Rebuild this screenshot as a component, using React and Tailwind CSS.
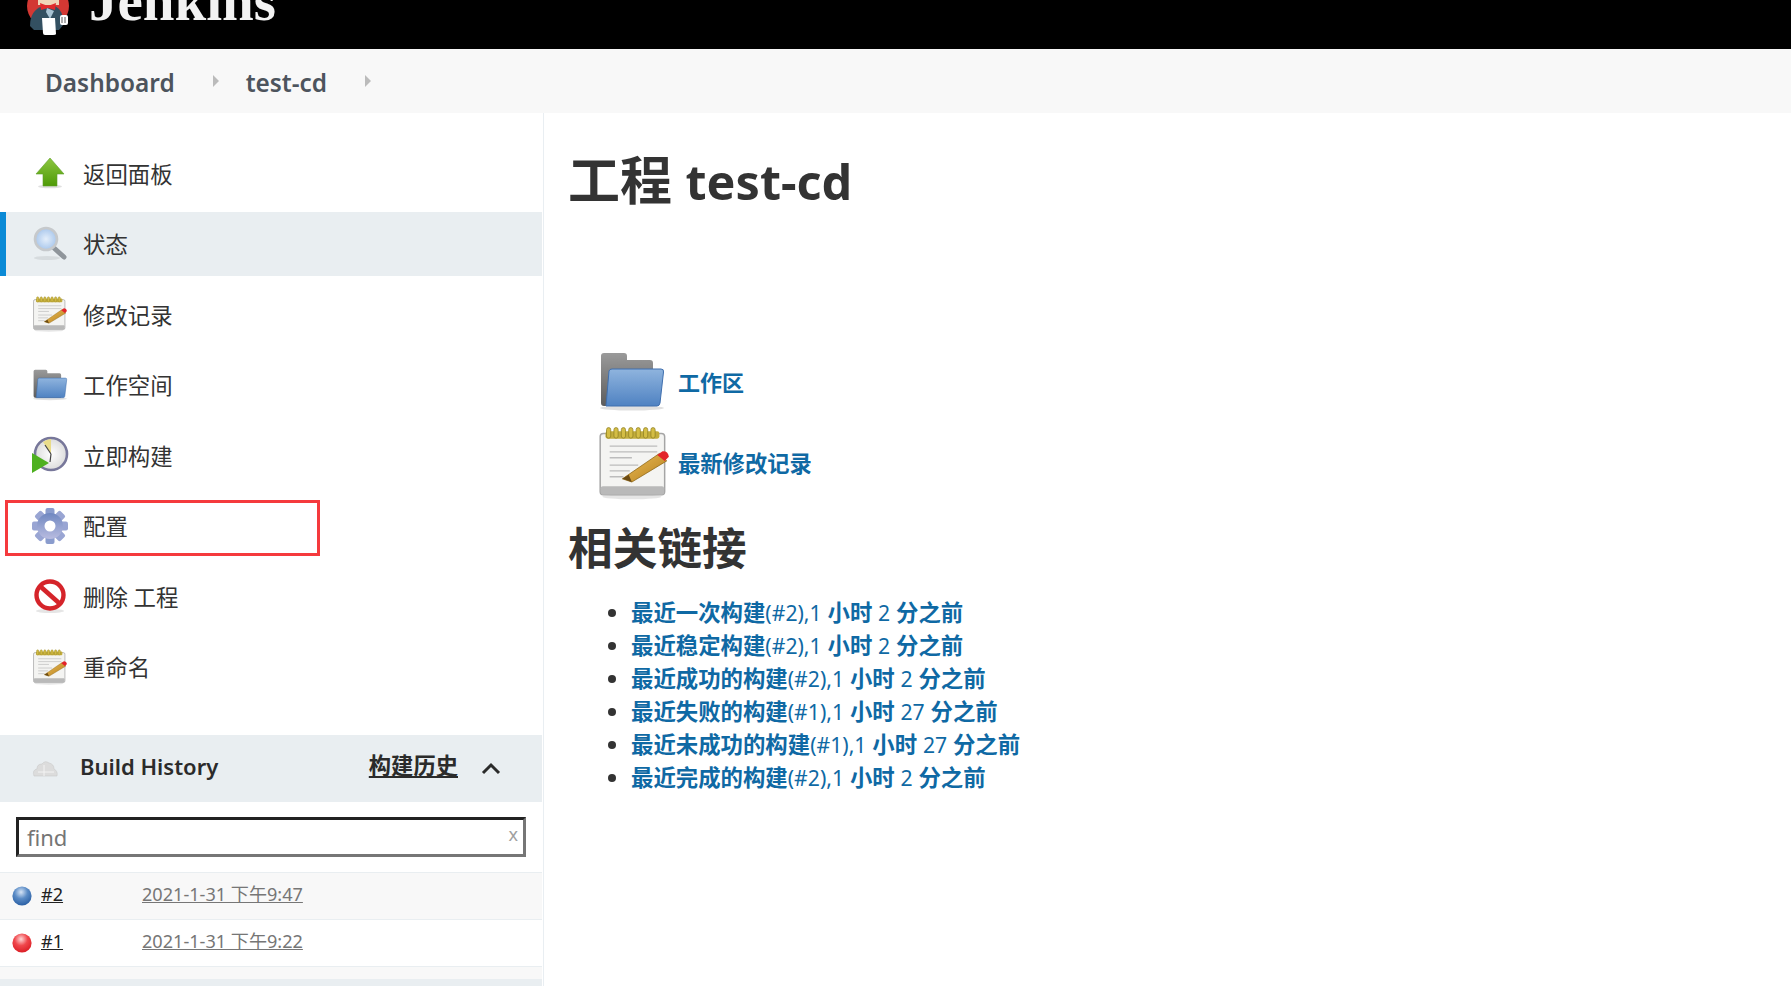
import React from "react";

const FF = "font-['Noto_Sans','Noto_Sans_CJK_SC',sans-serif]";

function Defs() {
  return (
    <svg width="0" height="0" className="absolute">
      <defs>
        <linearGradient id="fold" x1="0" y1="0" x2="0" y2="1">
          <stop offset="0" stopColor="#8fb4de" />
          <stop offset="1" stopColor="#4f82c2" />
        </linearGradient>
        <linearGradient id="back" x1="0" y1="0" x2="0" y2="1">
          <stop offset="0" stopColor="#9a9a9a" />
          <stop offset="1" stopColor="#5c5c5c" />
        </linearGradient>
        <linearGradient id="arrow" x1="0" y1="0" x2="0" y2="1">
          <stop offset="0" stopColor="#8cc63f" />
          <stop offset="1" stopColor="#4e9a06" />
        </linearGradient>
        <linearGradient id="pen" x1="0" y1="0" x2="1" y2="1">
          <stop offset="0" stopColor="#eebf5a" />
          <stop offset="1" stopColor="#b57f1c" />
        </linearGradient>
        <linearGradient id="gear" x1="0" y1="0" x2="0" y2="1">
          <stop offset="0" stopColor="#6f87c0" />
          <stop offset="1" stopColor="#b9bce0" />
        </linearGradient>
        <radialGradient id="blueBall" cx="0.45" cy="0.3" r="0.75">
          <stop offset="0" stopColor="#d6e4f5" />
          <stop offset="0.45" stopColor="#5b8cc6" />
          <stop offset="1" stopColor="#23599f" />
        </radialGradient>
        <radialGradient id="redBall" cx="0.45" cy="0.3" r="0.75">
          <stop offset="0" stopColor="#ffd6d6" />
          <stop offset="0.45" stopColor="#f0474c" />
          <stop offset="1" stopColor="#d81820" />
        </radialGradient>
        <radialGradient id="lens" cx="0.5" cy="0.5" r="0.5">
          <stop offset="0" stopColor="#e4eefa" />
          <stop offset="1" stopColor="#a9c7ec" />
        </radialGradient>
        <radialGradient id="clock" cx="0.5" cy="0.5" r="0.5">
          <stop offset="0" stopColor="#ffffff" />
          <stop offset="1" stopColor="#dcdcdc" />
        </radialGradient>
      </defs>
    </svg>
  );
}

function Arrow() {
  return (
    <svg viewBox="0 0 32 32" className="w-8 h-8 blur-[0.4px]">
      <ellipse cx="16" cy="29.5" rx="12" ry="1.8" fill="#000" opacity="0.12" />
      <path d="M16 1 L30 17 H23 V29 H9 V17 H2 Z" fill="url(#arrow)" stroke="#5e9f2a" strokeWidth="0.6" />
    </svg>
  );
}
function Lens() {
  return (
    <svg viewBox="0 0 36 36" className="w-9 h-9 blur-[0.4px]">
      <ellipse cx="15" cy="32" rx="13" ry="2" fill="#000" opacity="0.08" />
      <path d="M22 22 L32 31" stroke="#8f959b" strokeWidth="5" strokeLinecap="round" />
      <circle cx="14" cy="13" r="11" fill="url(#lens)" stroke="#c6c9cc" strokeWidth="2.6" />
    </svg>
  );
}
function Notepad() {
  return (
    <svg viewBox="0 0 68 70" className="w-full h-full blur-[0.4px]">
      <ellipse cx="32" cy="67" rx="28" ry="2.4" fill="#000" opacity="0.1" />
      <rect x="2" y="7" width="61" height="58" rx="3" fill="#f4f4f2" stroke="#a5a5a5" strokeWidth="1.4" />
      <rect x="2.5" y="57" width="60" height="8" rx="2" fill="#b9b9b9" />
      <rect x="7" y="5" width="51" height="7" rx="2" fill="#c2ad3c" />
      {[10, 17, 24, 31, 38, 45, 52].map((x) => (
        <rect key={x} x={x - 2} y="1.5" width="4" height="10" rx="2" fill="#d4bd44" stroke="#8e7f24" strokeWidth="0.7" />
      ))}
      <path d="M11 19 H56 M11 24.5 H56 M11 30 H32 M11 37 H38 M11 42.5 H30 M11 48 H24" stroke="#bcbcbc" strokeWidth="1.3" />
      <path d="M23 50 L58 26 L65 33 L32 53 Z" fill="url(#pen)" stroke="#8a6414" strokeWidth="0.7" />
      <path d="M23 50 L29 46 L32 53 Z" fill="#6b4b14" />
      <path d="M56 27.5 L61 24 Q66 23.5 67 29 L63 33 Z" fill="#e3242b" />
    </svg>
  );
}
function Folder() {
  return (
    <svg viewBox="0 0 68 60" className="w-full h-full blur-[0.4px]">
      <ellipse cx="34" cy="56" rx="32" ry="2.6" fill="#000" opacity="0.12" />
      <path d="M3 4 Q3 1 6 1 H26 Q29 1 29 4 V8 H52 Q55 8 55 11 V54 H6 Q3 54 3 51 Z" fill="url(#back)" />
      <path d="M11 19 Q11.5 17 14 17 H63 Q66 17 65.5 20 L62 51 Q61.5 54 59 54 H8 Z" fill="url(#fold)" stroke="#3f6fae" strokeWidth="1" />
    </svg>
  );
}
function Clock() {
  return (
    <svg viewBox="0 0 38 38" className="w-[38px] h-[38px] blur-[0.4px]">
      <circle cx="20" cy="18" r="16" fill="url(#clock)" stroke="#77779a" strokeWidth="2.6" />
      <path d="M20 18 L12 6 A15 15 0 0 1 20 3 Z" fill="#e9dc8a" />
      <path d="M20 18 L14 9 M20 18 L19 26" stroke="#444" strokeWidth="1.2" />
      <path d="M1 17 L18 27 L1 37 Z" fill="#4eb020" />
    </svg>
  );
}
function Gear() {
  const teeth = [0, 45, 90, 135];
  return (
    <svg viewBox="0 0 38 38" className="w-[38px] h-[38px] blur-[0.4px]">
      <g>
        {teeth.map((a) => (
          <rect key={a} x="14.5" y="1" width="9" height="36" rx="2" transform={`rotate(${a} 19 19)`} fill={a === 0 ? "#8a9ccd" : "#99a5d3"} />
        ))}
        <circle cx="19" cy="19" r="13" fill="url(#gear)" />
      </g>
      <circle cx="19" cy="19" r="5.5" fill="#fff" />
    </svg>
  );
}
function Forbid() {
  return (
    <svg viewBox="0 0 36 36" className="w-9 h-9 blur-[0.4px]">
      <ellipse cx="18" cy="33" rx="14" ry="2" fill="#000" opacity="0.1" />
      <circle cx="18" cy="17" r="13.5" fill="#fff" stroke="#d5242a" strokeWidth="4.4" />
      <path d="M9 9 L27 25" stroke="#d5242a" strokeWidth="4.6" />
    </svg>
  );
}
function Cloud() {
  return (
    <svg viewBox="0 0 26 20" className="w-[26px] h-5 blur-[0.5px]">
      <path d="M2 18 Q0 12 5 11 Q5 6 10 6 Q13 2 17 5 Q22 6 22 11 Q26 13 25 18 Z" fill="#dcdcdc" stroke="#c9c9c9" strokeWidth="0.6" />
      <path d="M6 14 H22 M12 7 V18" stroke="#f3f3f3" strokeWidth="1" />
    </svg>
  );
}
function Butler() {
  return (
    <svg viewBox="0 0 46 50" className="w-[46px] h-[50px] blur-[0.3px]">
      <circle cx="23" cy="20" r="21" fill="#d33833" />
      <path d="M13 0 H34 V19 H13 Z" fill="#f0d6b7" />
      <path d="M5 40 Q5 24 18 20 L30 20 Q38 24 39 38 L34 44 H9 Z" fill="#335061" />
      <path d="M15 17 L23 20 L31 17 L30 24 L23 22 L16 24 Z" fill="#e02b2b" />
      <path d="M22 22 L29 25 L25 33 L21 26 Z" fill="#a9c4d4" />
      <path d="M17 32 H30 L31 48 Q31 49 28 49 H20 Q18 49 18 47 Z" fill="#fff" />
      <rect x="35" y="29" width="8" height="10" rx="2" fill="#fff" />
      <path d="M37 31 V37 M40 31 V37" stroke="#333" strokeWidth="0.8" />
    </svg>
  );
}

const nav = [
  ["返回面板", <Arrow />],
  ["状态", <Lens />],
  ["修改记录", <div className="w-9 h-9"><Notepad /></div>],
  ["工作空间", <div className="w-9 h-8"><Folder /></div>],
  ["立即构建", <Clock />],
  ["配置", <Gear />],
  ["删除 工程", <Forbid />],
  ["重命名", <div className="w-9 h-9"><Notepad /></div>],
];

const links = [
  ["最近一次构建", "(#2),1", "小时", "2", "分之前"],
  ["最近稳定构建", "(#2),1", "小时", "2", "分之前"],
  ["最近成功的构建", "(#2),1", "小时", "2", "分之前"],
  ["最近失败的构建", "(#1),1", "小时", "27", "分之前"],
  ["最近未成功的构建", "(#1),1", "小时", "27", "分之前"],
  ["最近完成的构建", "(#2),1", "小时", "2", "分之前"],
];

export default function App() {
  return (
    <div className={`${FF} w-[1791px] h-[986px] overflow-hidden bg-white text-[#333]`}>
      <Defs />
      <header className="h-[49px] bg-black flex items-start overflow-hidden">
        <div className="ml-[25px] -mt-[14px] shrink-0"><Butler /></div>
        <span className="ml-[18px] -mt-[31px] font-['Liberation_Serif',serif] font-bold text-[57px] leading-[64px] text-[#f2f2f2]">Jenkins</span>
      </header>
      <nav className="h-[64px] bg-[#f8f8f8] flex items-center pl-[45px] pt-[5px] text-[24.4px] font-semibold text-[#4d545d]">
        <span>Dashboard</span>
        <span className="ml-[38px] mb-[5px] w-0 h-0 border-y-[6.5px] border-y-transparent border-l-[6px] border-l-[#bbbbbb]" />
        <span className="ml-[27px]">test-cd</span>
        <span className="ml-[38px] mb-[5px] w-0 h-0 border-y-[6.5px] border-y-transparent border-l-[6px] border-l-[#bbbbbb]" />
      </nav>
      <div className="flex h-[873px]">
        <aside className="w-[544px] shrink-0 border-r border-r-[#e9eef2] pr-px flex flex-col">
          <ul className="pt-[28px] flex flex-col gap-[6.5px]">
            {nav.map(([label, icon], i) => (
              <li
                key={i}
                className={`relative h-[64px] flex items-center text-[22.4px] text-[#333] ${i === 1 ? "bg-[#e9eef1]" : ""}`}
              >
                {i === 1 && <span className="absolute left-0 top-0 bottom-0 w-[6px] bg-[#0b8ad6]" />}
                {i === 5 && <span className="absolute left-[5px] top-[6px] w-[315px] h-[56px] border-[3px] border-[#f53a3d]" />}
                <span className="w-[83px] pl-[31px] pr-[14px] flex items-center justify-center shrink-0">{icon}</span>
                <span className="pt-[3px]">{label}</span>
              </li>
            ))}
          </ul>
          <div className="mt-[36px] h-[67px] bg-[#e9eef1] flex items-center pl-[32px] pr-[41px]">
            <Cloud />
            <span className="ml-[22px] pb-[4px] text-[22px] font-semibold text-[#2b2b2b]">Build History</span>
            <span className="ml-auto pb-[4px] text-[22.3px] font-semibold underline text-[#2b2b2b]">构建历史</span>
            <svg viewBox="0 0 20 14" className="ml-[23px] w-[20px] h-[14px]"><path d="M2 12 L10 4 L18 12" fill="none" stroke="#2b2b2b" strokeWidth="3" /></svg>
          </div>
          <div className="h-[70px] flex items-center pl-[16px] pr-[16px] pt-px">
            <div className="relative w-full h-[40px] bg-white border-[3px] border-t-[#222] border-l-[#222] border-r-[#767676] border-b-[#767676] flex items-center pl-[8px] text-[22px] text-[#757575]">
              find
              <span className="absolute right-[5px] top-[1px] text-[18px] text-[#a0a0a0]">x</span>
            </div>
          </div>
          <div className="border-t border-t-[#e9eef1] h-[47px] bg-[#f8f8f8] flex items-center text-[18.1px]">
            <span className="ml-[12px] w-[20px] h-[22px]"><svg viewBox="0 0 20 22" className="w-[20px] h-[22px]"><circle cx="10" cy="11" r="9.6" fill="url(#blueBall)" /></svg></span>
            <span className="ml-[9px] w-[101px] pb-[2px] underline text-[#222]">#2</span>
            <span className="pb-[2px] underline text-[#767676]">2021-1-31 下午9:47</span>
          </div>
          <div className="border-t border-t-[#e9eef1] h-[47px] bg-white flex items-center text-[18.1px]">
            <span className="ml-[12px] w-[20px] h-[22px]"><svg viewBox="0 0 20 22" className="w-[20px] h-[22px]"><circle cx="10" cy="11" r="9.6" fill="url(#redBall)" /></svg></span>
            <span className="ml-[9px] w-[101px] pb-[2px] underline text-[#222]">#1</span>
            <span className="pb-[2px] underline text-[#767676]">2021-1-31 下午9:22</span>
          </div>
          <div className="border-t border-t-[#e9eef1] h-[13px] bg-[#f8f8f8]" />
          <div className="flex-1 bg-[#e9eef1]" />
        </aside>
        <main className="flex-1 pl-[24px]">
          <h1 className="mt-[32px] h-[70px] leading-[70px] text-[52px] font-bold text-[#333]">工程 <span className="text-[48.5px]">test-cd</span></h1>
          <div className="mt-[133px] flex flex-col">
            <div className="flex items-center h-[68px] ml-[30px]">
              <div className="w-[68px] h-[64px] mr-[12px]"><Folder /></div>
              <a className="text-[22px] font-bold text-[#0f69a4]">工作区</a>
            </div>
            <div className="flex items-center h-[74px] ml-[30px] mt-[10px]">
              <div className="w-[72px] h-[74px] mr-[8px]"><Notepad /></div>
              <a className="pt-[2px] text-[22.3px] font-bold text-[#0f69a4]">最新修改记录</a>
            </div>
          </div>
          <h2 className="mt-[17px] h-[62px] leading-[62px] text-[44.7px] font-bold text-[#333]">相关链接</h2>
          <ul className="mt-[17px] pl-[63px] list-disc marker:text-[#333] text-[22.4px] leading-[33px]">
            {links.map((l, i) => (
              <li key={i} className="text-[#333]">
                <a className="text-[#0f69a4] font-semibold">{l[0]}<span className="font-normal text-[21.2px]">{l[1]}</span> {l[2]} <span className="font-normal text-[21.2px]">{l[3]}</span> {l[4]}</a>
              </li>
            ))}
          </ul>
        </main>
      </div>
    </div>
  );
}
